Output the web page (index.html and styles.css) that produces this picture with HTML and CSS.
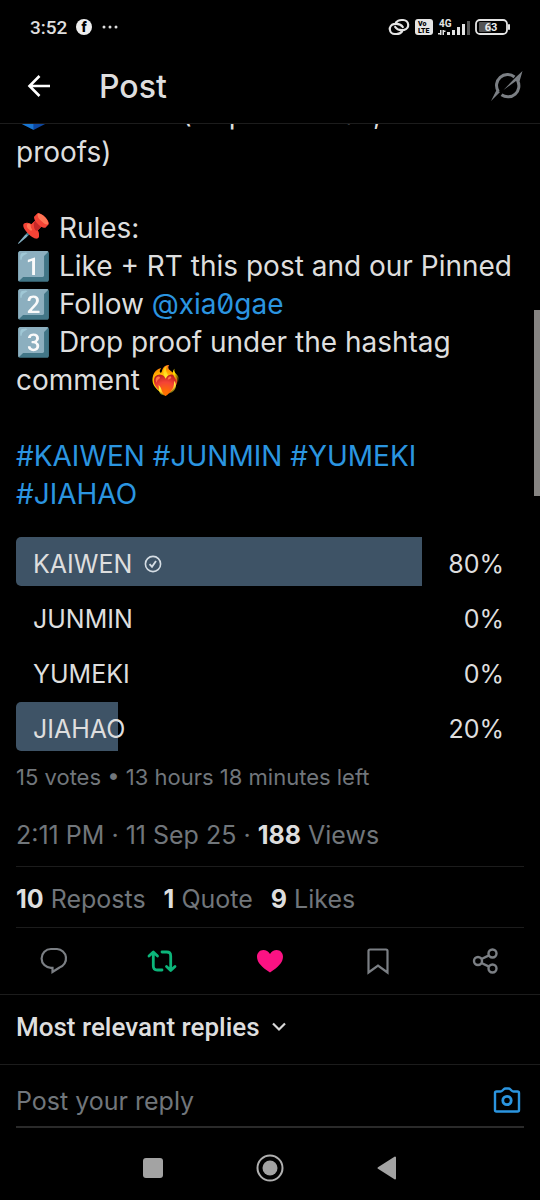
FILE: index.html
```
<!DOCTYPE html>
<html lang="en">
<head>
    <meta charset="UTF-8">
    <meta name="viewport" content="width=device-width, initial-scale=1.0">
    <title>Post</title>
    <link rel="stylesheet" href="styles.css">
</head>
<body>
<div class="screen">

    <div class="status-bar">
        <div class="status-left">
            <span class="clock">3:52</span>
            <svg width="16" height="16" viewBox="0 0 16 16">
                <circle cx="8" cy="8" r="8" fill="#eee"/>
                <text x="8" y="13" text-anchor="middle" font-size="14" font-weight="900" fill="#000">f</text>
            </svg>
            <svg width="18" height="4" viewBox="0 0 18 4" fill="#ddd">
                <circle cx="3" cy="2" r="1.5"/><circle cx="9" cy="2" r="1.5"/><circle cx="15" cy="2" r="1.5"/>
            </svg>
        </div>
        <div class="status-right">
            <svg width="22" height="18" viewBox="0 0 22 18" fill="none" stroke="#e4e4e4" stroke-width="2.2" stroke-linecap="round">
                <path d="M8 4.500C9.500 2.500 11 2 13.500 2h1.700a5 5 0 0 1 1 9.900c-3.500.6-7 .3-9-2.900"/>
                <path d="M14 13.500C12.500 15.500 11 16 8.500 16H6.800a5 5 0 0 1-1-9.900c3.500-.6 7-.3 9 2.900"/>
            </svg>
            <svg width="18" height="16" viewBox="0 0 18 16">
                <rect width="18" height="16" rx="3" fill="#e4e4e4"/>
                <text x="3" y="7" font-size="7" font-weight="900" fill="#000">Vo</text>
                <text x="3" y="14" font-size="7" font-weight="900" fill="#000">LTE</text>
            </svg>
            <svg width="32" height="17" viewBox="0 0 32 17" fill="#e4e4e4">
                <text x="1" y="8" font-size="10" font-weight="700">4G</text>
                <path d="M2 11h1.500v5H2zM0 14h3v1.500H0zM4.500 11H6v5H4.500zM4.500 11.500h3V13h-3z"/>
                <rect x="9" y="13" width="3" height="3"/>
                <rect x="14" y="11" width="3" height="5"/>
                <rect x="19" y="8" width="3" height="8"/>
                <rect x="24" y="5" width="3" height="11"/>
                <rect x="29" y="2" width="3" height="14" fill="#555"/>
            </svg>
            <svg width="36" height="16" viewBox="0 0 36 16">
                <rect x="4" y="3" width="12" height="10" rx="1" fill="#555"/>
                <rect x="1" y="1" width="31" height="14" rx="4" fill="none" stroke="#e4e4e4" stroke-width="1.800"/>
                <rect x="33" y="5" width="2" height="6" rx="1" fill="#e4e4e4"/>
                <text x="16" y="12" text-anchor="middle" font-size="11" font-weight="700" fill="#eee">63</text>
            </svg>
        </div>
    </div>

    <header class="header">
        <button class="icon-button" aria-label="Back">
            <svg width="24" height="24" viewBox="0 0 24 24" fill="none" stroke="#fff" stroke-width="2.600">
                <path d="M23 12H3M12.500 2L2.500 12l10 10"/>
            </svg>
        </button>
        <h1 class="header-title">Post</h1>
        <button class="icon-button" aria-label="Grok">
            <svg width="34" height="32" viewBox="0 0 34 32">
                <path d="M8.300 21.500A11 11 0 0 1 24.500 7M27.500 10.500A11 11 0 0 1 11.500 24.800" fill="none" stroke="#7b7f84" stroke-width="3"/>
                <path d="M32.500 1L29.500 11.500 26 11 13.500 20 25.500 7.500zM1 31l5.500-11 3.500 2z" fill="#7b7f84"/>
            </svg>
        </button>
    </header>

    <main class="thread">
        <div class="scroll-thumb"></div>

        <article class="post">
            <p class="post-text">🗳️ 30 votes (10 points max, 3 + cost<br>
            proofs)<br>
            <br>
            📌 Rules:<br>
            1️⃣ Like + RT this post and our Pinned<br>
            2️⃣ Follow <a class="handle" href="#">@xia0gae</a><br>
            3️⃣ Drop proof under the hashtag<br>
            comment ❤️‍🔥<br>
            <br>
            <a href="#">#KAIWEN</a> <a href="#">#JUNMIN</a> <a href="#">#YUMEKI</a><br>
            <a href="#">#JIAHAO</a></p>

            <ul class="poll">
                <li class="poll-row">
                    <span class="poll-bar" style="width: 80%"></span>
                    <span class="poll-name">KAIWEN
                        <svg width="18" height="18" viewBox="0 0 18 18" fill="none" stroke="#d5dde4" stroke-width="1.600">
                            <circle cx="9" cy="9" r="7.600"/><path d="M5.500 9.200l2.500 2.500 4-5.700" stroke-width="1.900"/>
                        </svg>
                    </span>
                    <span>80%</span>
                </li>
                <li class="poll-row">
                    <span class="poll-name">JUNMIN</span>
                    <span>0%</span>
                </li>
                <li class="poll-row">
                    <span class="poll-name">YUMEKI</span>
                    <span>0%</span>
                </li>
                <li class="poll-row">
                    <span class="poll-bar" style="width: 20%"></span>
                    <span class="poll-name">JIAHAO</span>
                    <span>20%</span>
                </li>
            </ul>
            <p class="poll-meta">15 votes • 13 hours 18 minutes left</p>

            <p class="post-meta">2:11 PM · 11 Sep 25 · <b>188</b> Views</p>
            <div class="stats">
                <a href="#"><b>10</b> Reposts</a>
                <a href="#"><b>1</b> Quote</a>
                <a href="#"><b>9</b> Likes</a>
            </div>
        </article>

        <div class="actions">
            <button class="icon-button" aria-label="Reply">
                <svg width="28" height="28" viewBox="0 0 28 28" fill="none" stroke="#7b7f84" stroke-width="2.200">
                    <path d="M11 2h6a9.500 9.500 0 0 1 2.500 18.500L12.500 25v-4.200H11A9.400 9.400 0 0 1 11 2z"/>
                </svg>
            </button>
            <button class="icon-button" aria-label="Repost">
                <svg width="30" height="28" viewBox="0 0 30 28" fill="none" stroke="#0cb57a" stroke-width="2.800" stroke-linecap="round" stroke-linejoin="round">
                    <path d="M2 9l4.300-4L10.500 9M6.300 6v13q0 4 4 4H15"/>
                    <path d="M28 19.500l-4.300 4-4.200-4M23.700 22.500V9q0-4-4-4H15"/>
                </svg>
            </button>
            <button class="icon-button" aria-label="Like">
                <svg width="28" height="28" viewBox="0 0 28 28" fill="#fb1283">
                    <path d="M14 25.500C6 20.500 1 15.500 1 9.800 1 5.800 3.800 3 7.300 3 10 3 12.500 4.500 14 7c1.500-2.500 4-4 6.700-4C24.200 3 27 5.800 27 9.800c0 5.700-5 10.700-13 15.700z"/>
                </svg>
            </button>
            <button class="icon-button" aria-label="Bookmark">
                <svg width="28" height="28" viewBox="0 0 28 28" fill="none" stroke="#7b7f84" stroke-width="2.200">
                    <path d="M4.500 4q0-1.500 1.500-1.500h16q1.500 0 1.500 1.500v21.500L14 18.500l-9.500 7z"/>
                </svg>
            </button>
            <button class="icon-button" aria-label="Share">
                <svg width="28" height="28" viewBox="0 0 28 28" fill="none" stroke="#7b7f84" stroke-width="2.400">
                    <circle cx="6" cy="14" r="4"/><circle cx="20.500" cy="6.500" r="4"/><circle cx="20.500" cy="21.500" r="4"/>
                    <path d="M9.500 12l7.500-3.700M9.500 16l7.500 3.700"/>
                </svg>
            </button>
        </div>

        <button class="sort">Most relevant replies
            <svg width="16" height="10" viewBox="0 0 16 10" fill="none" stroke="#d9d9d9" stroke-width="2.200">
                <path d="M2 1.500l6 6 6-6"/>
            </svg>
        </button>
    </main>

    <form class="reply">
        <input class="reply-input" type="text" placeholder="Post your reply" aria-label="Post your reply">
        <button class="icon-button" type="button" aria-label="Add photo">
            <svg width="28" height="28" viewBox="0 0 28 28" fill="none" stroke="#2b95e0" stroke-width="2.400" stroke-linejoin="round">
                <path d="M3.500 5.500h4q1 0 2-1L10.500 3.500q1-1 2-1h3q1 0 2 1l1 1q1 1 2 1h4q1.500 0 1.500 1.500v17q0 1.500-1.500 1.500h-21Q2 25.500 2 24V7q0-1.500 1.500-1.500z"/>
                <circle cx="14" cy="14.500" r="4.200" stroke-width="2.800"/>
            </svg>
        </button>
    </form>

    <nav class="nav-bar">
        <button class="icon-button" aria-label="Recent apps">
            <svg width="28" height="28" viewBox="0 0 28 28"><rect x="4" y="4" width="20" height="20" rx="3" fill="#a3a3a3"/></svg>
        </button>
        <button class="icon-button" aria-label="Home">
            <svg width="28" height="28" viewBox="0 0 28 28">
                <circle cx="14" cy="14" r="12.500" fill="none" stroke="#b0b0b0" stroke-width="2"/>
                <circle cx="14" cy="14" r="7.500" fill="#a3a3a3"/>
            </svg>
        </button>
        <button class="icon-button" aria-label="Back">
            <svg width="28" height="28" viewBox="0 0 28 28" fill="#a3a3a3" stroke="#a3a3a3" stroke-width="2" stroke-linejoin="round">
                <path d="M5.500 14L22 3.500v21z"/>
            </svg>
        </button>
    </nav>

</div>
</body>
</html>
```
FILE: styles.css
```
* {
    box-sizing: border-box;
}
body {
    margin: 0;
    background: #000;
    color: #dedede;
    font-family: Inter, "Noto Sans", sans-serif;
}
p, h1, ul {
    margin: 0;
    padding: 0;
}
a {
    color: #2b95e0;
    text-decoration: none;
}
svg {
    display: block;
    flex: none;
}
.screen {
    min-height: 100vh;
    display: flex;
    flex-direction: column;
}
.icon-button {
    display: flex;
    align-items: center;
    justify-content: center;
    padding: 0;
    border: none;
    background: none;
    cursor: pointer;
}

/* phone status bar */
.status-bar {
    display: flex;
    justify-content: space-between;
    align-items: center;
    height: 50px;
    padding: 4px 29px 0 30px;
    font-family: Roboto, sans-serif;
}
.status-left, .status-right {
    display: flex;
    align-items: center;
}
.status-left {
    gap: 9px;
}
.status-right {
    gap: 5px;
}
.clock {
    font-size: 19px;
    font-weight: 500;
}

.header {
    display: flex;
    align-items: center;
    height: 74px;
    padding: 0 16px 2px 27px;
    border-bottom: 1px solid #1c1c1c;
}
.header-title {
    flex: 1;
    margin-left: 48px;
    padding-top: 2px;
    font-size: 32px;
    line-height: 38px;
    font-weight: 500;
}

.thread {
    position: relative;
    overflow: hidden;
}
.scroll-thumb {
    position: absolute;
    top: 186px;
    right: 0;
    width: 6px;
    height: 186px;
    background: #868482;
}
.post {
    padding: 0 16px;
}
.post-text {
    /* scrolled part way under the header */
    margin-top: -29px;
    font-size: 28px;
    line-height: 38px;
    white-space: nowrap;
}
.handle {
    font-feature-settings: "zero";
}

.poll {
    display: grid;
    gap: 6px;
    margin-top: 24px;
    list-style: none;
}
.poll-row {
    position: relative;
    display: flex;
    align-items: center;
    justify-content: space-between;
    height: 49px;
    padding: 4px 20px 0 17px;
    font-size: 25px;
}
.poll-row span {
    z-index: 1;
}
.poll-row .poll-bar {
    position: absolute;
    left: 0;
    top: 0;
    bottom: 0;
    z-index: 0;
    background: #3e5366;
    border-radius: 5px 0 0 5px;
}
.poll-name {
    display: flex;
    align-items: center;
    gap: 12px;
}
.poll-meta {
    margin-top: 10px;
    font-size: 22px;
    line-height: 32px;
    color: #71767b;
}
.post-meta, .stats {
    font-size: 25px;
    line-height: 32px;
    color: #71767b;
}
.post-meta {
    margin-top: 26px;
    padding-bottom: 15px;
    border-bottom: 1px solid #1c1c1c;
}
.stats {
    display: flex;
    gap: 18px;
    padding: 16px 0 12px;
    border-bottom: 1px solid #1c1c1c;
}
.stats a {
    color: #71767b;
}
.post-meta b, .stats b {
    color: #dedede;
    font-weight: 700;
}

.actions {
    display: grid;
    grid-template-columns: repeat(5, 1fr);
    height: 67px;
    border-bottom: 1px solid #1c1c1c;
}
.sort {
    display: flex;
    align-items: center;
    gap: 11px;
    width: 100%;
    height: 70px;
    padding: 0 16px 6px;
    border: none;
    border-bottom: 1px solid #1c1c1c;
    background: none;
    color: #dedede;
    font-family: Roboto, sans-serif;
    font-size: 26px;
    font-weight: 500;
}

.reply {
    display: flex;
    align-items: center;
    height: 63px;
    margin: 0 16px;
    padding: 8px 3px 0 0;
    border-bottom: 2px solid #2a2a2a;
}
.reply-input {
    flex: 1;
    min-width: 0;
    padding: 2px 0 0;
    border: none;
    outline: none;
    background: none;
    color: #dedede;
    font-family: inherit;
    font-size: 25px;
}
.reply-input::placeholder {
    color: #71767b;
    opacity: 1;
}

.nav-bar {
    display: flex;
    justify-content: center;
    gap: 89px;
    padding: 26px 0;
}
```
